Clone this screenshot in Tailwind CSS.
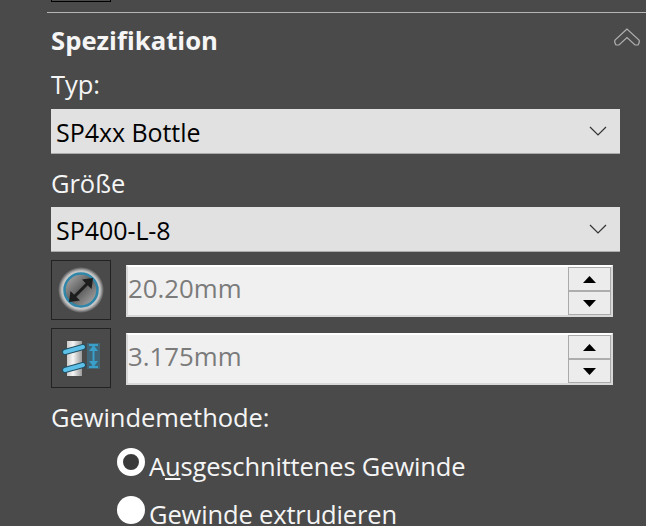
<!DOCTYPE html>
<html lang="de"><head><meta charset="utf-8">
<script src="https://cdn.jsdelivr.net/npm/@tailwindcss/browser@4"></script></head>
<body class="m-0 bg-[#4a4a4a]">
<div class="w-[646px] h-[526px] overflow-hidden bg-[#4a4a4a] font-['Open_Sans','Noto_Sans',sans-serif] text-[#f5f5f5] relative">
  <div class="ml-[51px] w-[60px] h-[2px] border-x border-b border-black"></div>
  <div class="ml-[47px] mt-[10px] h-px bg-[#b5b5b5]"></div>
  <div class="pl-[51px] w-[620px]">
    <div class="flex items-start justify-between h-[46px] w-[590px]">
      <h2 class="text-[25.7px] leading-[56px] font-bold">Spezifikation</h2>
      <svg class="mt-[14px]" width="28" height="20" viewBox="0 0 28 20" fill="none" stroke="#b0b0b0" stroke-width="1.2"><path d="M14 2 L2 13 Q1 15 3 18 L6 18 L14 10.500 L22 18 L25 18 Q27 15 26 13 Z"/></svg>
    </div>
    <div class="text-[25.5px] leading-[50px] h-[50px] tracking-[-0.05px]">Typ:</div>
    <div class="flex items-center justify-between h-[45px] w-[569px] bg-[#e1e1e1] border-b border-[#aaa] text-black pl-[5px] pr-[13px]">
      <span class="text-[25px] pt-[3px] tracking-[-0.05px]">SP4xx Bottle</span>
      <svg width="18" height="10" viewBox="0 0 18 10" fill="none" stroke="#333" stroke-width="1.2"><path d="M1 1 L9 9 L17 1"/></svg>
    </div>
    <div class="text-[25.5px] leading-[58px] h-[53px] tracking-[-0.05px]">Größe</div>
    <div class="flex items-center justify-between h-[45px] w-[569px] bg-[#e1e1e1] border-b border-[#aaa] text-black pl-[5px] pr-[13px]">
      <span class="text-[25px] pt-[3px] tracking-[-0.05px]">SP400-L-8</span>
      <svg width="18" height="10" viewBox="0 0 18 10" fill="none" stroke="#333" stroke-width="1.2"><path d="M1 1 L9 9 L17 1"/></svg>
    </div>
    <div class="mt-[8px] flex gap-[15px] h-[60px]">
      <div class="w-[60px] h-[60px] border border-[#222] flex items-center justify-center shrink-0">
        <svg width="46" height="46" viewBox="0 0 46 46">
          <defs><radialGradient id="g"><stop offset="0.72" stop-color="#d8d8d8"/><stop offset="0.84" stop-color="#bdbdbd"/><stop offset="1" stop-color="#4a4a4a"/></radialGradient>
          <linearGradient id="h" x1="0" y1="0" x2="1" y2="1"><stop offset="0" stop-color="#b9b9b9"/><stop offset="0.5" stop-color="#5c5c5c"/><stop offset="1" stop-color="#b9b9b9"/></linearGradient></defs>
          <circle cx="23" cy="23" r="23" fill="url(#g)"/>
          <circle cx="23" cy="23" r="16.500" fill="url(#h)" stroke="#2f86a8" stroke-width="2.500"/>
          <path d="M14 32 L32 14" stroke="#1d1d1d" stroke-width="3"/>
          <path d="M35 11 L33.500 22 L24 12.500 Z M11 35 L12.500 24 L22 33.500 Z" fill="#1d1d1d"/>
        </svg>
      </div>
      <div class="mt-[5px] w-[487px] h-[52px] flex bg-[#f0f0f0] border-2 border-[#d8d8d8] border-t-white text-[#7b7b7b]">
        <span class="flex-1 text-[25.8px] leading-[42px]">20.20mm</span>
        <div class="w-[43px] flex flex-col shrink-0 border border-[#aaa]">
          <div class="h-[24px] flex items-center justify-center border-b-2 border-[#adadad] bg-[#ececec]"><svg width="13" height="7"><path d="M6.500 0 L13 7 L0 7 Z" fill="#000"/></svg></div>
          <div class="flex-1 flex items-center justify-center bg-[#ececec]"><svg width="13" height="7"><path d="M0 0 L13 0 L6.500 7 Z" fill="#000"/></svg></div>
        </div>
      </div>
    </div>
    <div class="mt-[8px] flex gap-[15px] h-[60px]">
      <div class="w-[60px] h-[60px] border border-[#222] flex items-center justify-center shrink-0">
        <svg width="40" height="38" viewBox="0 0 40 38">
          <defs><linearGradient id="s"><stop offset="0" stop-color="#c9c9c9"/><stop offset="0.4" stop-color="#f5f5f5"/><stop offset="1" stop-color="#9a9a9a"/></linearGradient></defs>
          <rect x="6" y="2" width="15" height="35" fill="url(#s)"/>
          <rect x="26" y="4" width="13" height="26" fill="#3f6577"/>
          <path d="M32.500 7 V27 M28 6 H37 M28 28 H37" stroke="#3a9fc9" stroke-width="2" fill="none"/>
          <path d="M32.500 6 L37 12 H28 Z M32.500 28 L37 22 H28 Z" fill="#3a9fc9"/>
          <path d="M4 13 L22 8" stroke="#1f4f63" stroke-width="6" stroke-linecap="round"/>
          <path d="M4 31 L22 26" stroke="#1f4f63" stroke-width="6" stroke-linecap="round"/>
          <path d="M4 13 L22 8" stroke="#5cc0e8" stroke-width="4" stroke-linecap="round"/>
          <path d="M4 31 L22 26" stroke="#5cc0e8" stroke-width="4" stroke-linecap="round"/>
        </svg>
      </div>
      <div class="mt-[5px] w-[487px] h-[52px] flex bg-[#f0f0f0] border-2 border-[#d8d8d8] border-t-white text-[#7b7b7b]">
        <span class="flex-1 text-[25.8px] leading-[42px]">3.175mm</span>
        <div class="w-[43px] flex flex-col shrink-0 border border-[#aaa]">
          <div class="h-[24px] flex items-center justify-center border-b-2 border-[#adadad] bg-[#ececec]"><svg width="13" height="7"><path d="M6.500 0 L13 7 L0 7 Z" fill="#000"/></svg></div>
          <div class="flex-1 flex items-center justify-center bg-[#ececec]"><svg width="13" height="7"><path d="M0 0 L13 0 L6.500 7 Z" fill="#000"/></svg></div>
        </div>
      </div>
    </div>
    <div class="mt-[11px] text-[25.5px] leading-[36px] tracking-[-0.05px]">Gewindemethode:</div>
    <div class="mt-[13px] ml-[66px] flex items-start h-[48px] gap-[4px]">
      <span class="w-[28px] h-[28px] rounded-full bg-[#3a3a3a] border-[6px] border-white shrink-0"></span>
      <span class="text-[25.5px] leading-[37px] tracking-[-0.15px]">A<span class="underline underline-offset-2">u</span>sgeschnittenes Gewinde</span>
    </div>
    <div class="ml-[66px] flex items-start h-[48px] gap-[4px]">
      <span class="w-[28px] h-[28px] rounded-full bg-white shrink-0"></span>
      <span class="text-[25.5px] leading-[37px] tracking-[-0.15px]">Gewinde e<span class="underline underline-offset-2">x</span>trudieren</span>
    </div>
  </div>
</div>
</body></html>
